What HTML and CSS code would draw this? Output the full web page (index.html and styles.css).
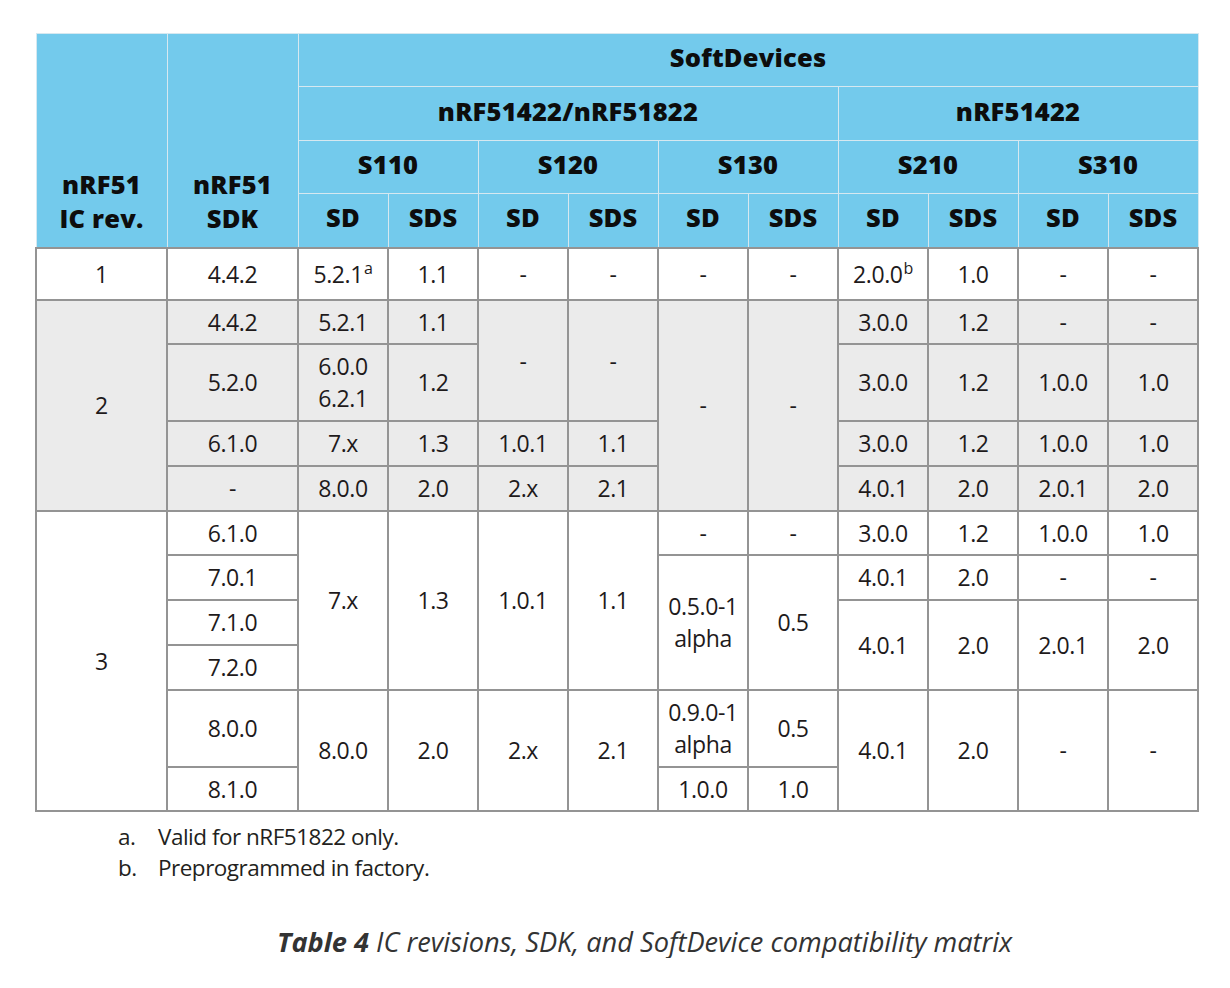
FILE: index.html
```html
<!DOCTYPE html>
<html>
<head>
<meta charset="utf-8">
<link rel="stylesheet" href="styles.css">
</head>
<body>
<div class="page">
<table class="matrix">
  <colgroup>
    <col class="c-wide"><col class="c-wide">
    <col class="c-n"><col class="c-n"><col class="c-n"><col class="c-n"><col class="c-n">
    <col class="c-n"><col class="c-n"><col class="c-n"><col class="c-n"><col class="c-n">
  </colgroup>
  <thead>
    <tr class="h1">
      <th rowspan="4" class="bottom">nRF51<br>IC rev.</th>
      <th rowspan="4" class="bottom">nRF51<br>SDK</th>
      <th colspan="10">SoftDevices</th>
    </tr>
    <tr class="h2">
      <th colspan="6">nRF51422/nRF51822</th>
      <th colspan="4">nRF51422</th>
    </tr>
    <tr class="h3">
      <th colspan="2">S110</th>
      <th colspan="2">S120</th>
      <th colspan="2">S130</th>
      <th colspan="2">S210</th>
      <th colspan="2">S310</th>
    </tr>
    <tr class="h4">
      <th>SD</th><th>SDS</th><th>SD</th><th>SDS</th><th>SD</th><th>SDS</th>
      <th>SD</th><th>SDS</th><th>SD</th><th>SDS</th>
    </tr>
  </thead>
  <tbody class="rev1">
    <tr class="r52">
      <td>1</td><td>4.4.2</td><td>5.2.1<sup class="fn">a</sup></td><td>1.1</td>
      <td>-</td><td>-</td><td>-</td><td>-</td>
      <td>2.0.0<sup class="fn">b</sup></td><td>1.0</td><td>-</td><td>-</td>
    </tr>
  </tbody>
  <tbody class="rev2">
    <tr class="r44">
      <td rowspan="4">2</td><td>4.4.2</td><td>5.2.1</td><td>1.1</td>
      <td rowspan="2" class="upper">-</td><td rowspan="2" class="upper">-</td>
      <td rowspan="4">-</td><td rowspan="4">-</td>
      <td>3.0.0</td><td>1.2</td><td>-</td><td>-</td>
    </tr>
    <tr class="r77">
      <td>5.2.0</td><td>6.0.0<br>6.2.1</td><td>1.2</td>
      <td>3.0.0</td><td>1.2</td><td>1.0.0</td><td>1.0</td>
    </tr>
    <tr class="r45">
      <td>6.1.0</td><td>7.x</td><td>1.3</td><td>1.0.1</td><td>1.1</td>
      <td>3.0.0</td><td>1.2</td><td>1.0.0</td><td>1.0</td>
    </tr>
    <tr class="r45">
      <td>-</td><td>8.0.0</td><td>2.0</td><td>2.x</td><td>2.1</td>
      <td>4.0.1</td><td>2.0</td><td>2.0.1</td><td>2.0</td>
    </tr>
  </tbody>
  <tbody class="rev3">
    <tr class="r44">
      <td rowspan="6">3</td><td>6.1.0</td>
      <td rowspan="4">7.x</td><td rowspan="4">1.3</td><td rowspan="4">1.0.1</td><td rowspan="4">1.1</td>
      <td>-</td><td>-</td>
      <td>3.0.0</td><td>1.2</td><td>1.0.0</td><td>1.0</td>
    </tr>
    <tr class="r45">
      <td>7.0.1</td>
      <td rowspan="3">0.5.0-1<br>alpha</td><td rowspan="3">0.5</td>
      <td>4.0.1</td><td>2.0</td><td>-</td><td>-</td>
    </tr>
    <tr class="r45">
      <td>7.1.0</td>
      <td rowspan="2">4.0.1</td><td rowspan="2">2.0</td><td rowspan="2">2.0.1</td><td rowspan="2">2.0</td>
    </tr>
    <tr class="r45">
      <td>7.2.0</td>
    </tr>
    <tr class="r77">
      <td>8.0.0</td>
      <td rowspan="2">8.0.0</td><td rowspan="2">2.0</td><td rowspan="2">2.x</td><td rowspan="2">2.1</td>
      <td>0.9.0-1<br>alpha</td><td>0.5</td>
      <td rowspan="2">4.0.1</td><td rowspan="2">2.0</td><td rowspan="2">-</td><td rowspan="2">-</td>
    </tr>
    <tr class="r44">
      <td>8.1.0</td><td>1.0.0</td><td>1.0</td>
    </tr>
  </tbody>
</table>

<ol class="notes">
  <li><span class="mark">a.</span><span>Valid for nRF51822 only.</span></li>
  <li><span class="mark">b.</span><span>Preprogrammed in factory.</span></li>
</ol>

<p class="caption"><b>Table 4</b> IC revisions, SDK, and SoftDevice compatibility matrix</p>
</div>
</body>
</html>
```

FILE: styles.css
```css
html, body {
  margin: 0;
  padding: 0;
  background: #ffffff;
}

body {
  font-family: "Open Sans", "Noto Sans", sans-serif;
  color: #231f20;
}

.page {
  padding: 33px 0 0 35px;
}

.matrix {
  width: 1163px;
  border-collapse: collapse;
  table-layout: fixed;
}

.c-wide { width: 131px; }
.c-n { width: 90px; }

.matrix th {
  background: #73caec;
  color: #0d0d0d;
  font-weight: 800;
  font-size: 25.5px;
  line-height: 30px;
  border: 1px solid #d6e8f0;
  padding: 0 0 6px 0;
  text-align: center;
  vertical-align: middle;
  letter-spacing: 0.2px;
}

.matrix th.bottom {
  vertical-align: bottom;
  line-height: 34px;
  padding-bottom: 12px;
}

.h1 { height: 53px; }
.h2 { height: 54px; }
.h3 { height: 53px; }
.h4 { height: 54px; }

.matrix td {
  font-size: 23px;
  line-height: 32px;
  border: 2px solid #949494;
  padding: 0;
  text-align: center;
  vertical-align: middle;
  letter-spacing: -0.4px;
  color: #1e1a1b;
}

.matrix td.upper {
  vertical-align: top;
  padding-top: 44px;
}

.rev2 td { background: #ebebeb; }

.r44 { height: 44px; }
.r45 { height: 45px; }
.r52 { height: 52px; }
.r77 { height: 77px; }

.fn {
  font-size: 16px;
  line-height: 0;
  vertical-align: 9px;
  margin-left: 1px;
}

.notes {
  list-style: none;
  margin: 9px 0 0 83px;
  padding: 0;
  font-size: 22.5px;
  line-height: 31px;
  letter-spacing: -0.5px;
  color: #231f20;
}

.notes li {
  display: flex;
}

.notes .mark {
  width: 40px;
}

.caption {
  margin: 43px 0 0 242px;
  font-size: 27.2px;
  line-height: 32px;
  font-style: italic;
  letter-spacing: 0;
  color: #333333;
}

.caption b {
  font-weight: 700;
}
```
